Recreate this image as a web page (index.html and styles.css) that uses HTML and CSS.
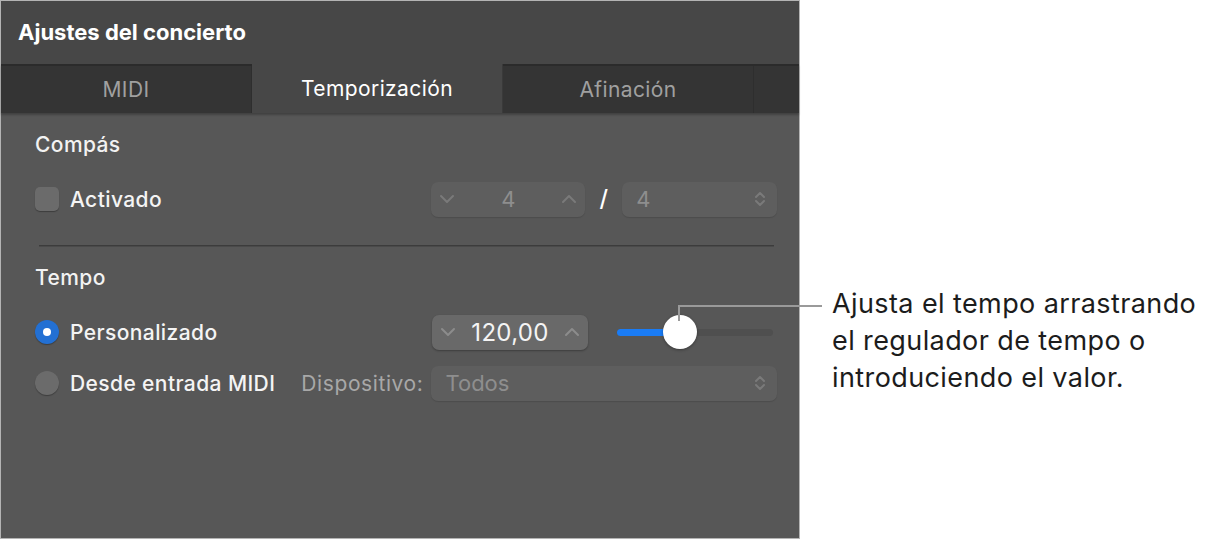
FILE: index.html
```html
<!DOCTYPE html>
<html>
<head>
    <meta charset="utf-8">
    <title>Ajustes del concierto</title>
    <link rel="stylesheet" href="styles.css">
</head>
<body>
    <div class="pagina">
        <div class="panel">
            <div class="cabecera">Ajustes del concierto</div>

            <div class="pestanas">
                <div class="pestana">MIDI</div>
                <div class="pestana activa">Temporización</div>
                <div class="pestana">Afinación</div>
                <div class="pestana resto"></div>
            </div>

            <div class="contenido">
                <h2 class="seccion">Compás</h2>

                <div class="fila">
                    <div class="etiquetas">
                        <span class="casilla"></span>
                        <span class="texto">Activado</span>
                    </div>
                    <div class="paso desactivado">
                        <svg class="flecha" width="16" height="10" viewBox="0 0 16 10"><polyline points="2,2 8,8 14,2"/></svg>
                        <span class="valor">4</span>
                        <svg class="flecha" width="16" height="10" viewBox="0 0 16 10"><polyline points="2,8 8,2 14,8"/></svg>
                    </div>
                    <span class="barra">/</span>
                    <div class="lista desactivado corta">
                        <span class="valor">4</span>
                        <svg class="flecha doble" width="12" height="18" viewBox="0 0 12 18"><polyline points="2,7 6,3 10,7"/><polyline points="2,11 6,15 10,11"/></svg>
                    </div>
                </div>

                <div class="separador"></div>

                <h2 class="seccion">Tempo</h2>

                <div class="fila">
                    <div class="etiquetas">
                        <span class="radio marcado"></span>
                        <span class="texto">Personalizado</span>
                    </div>
                    <div class="paso">
                        <svg class="flecha" width="16" height="10" viewBox="0 0 16 10"><polyline points="2,2 8,8 14,2"/></svg>
                        <span class="valor grande">120,00</span>
                        <svg class="flecha" width="16" height="10" viewBox="0 0 16 10"><polyline points="2,8 8,2 14,8"/></svg>
                    </div>
                    <div class="deslizador">
                        <div class="relleno" style="width: 64px"></div>
                        <div class="mando"></div>
                    </div>
                </div>

                <div class="fila">
                    <div class="etiquetas">
                        <span class="radio"></span>
                        <span class="texto">Desde entrada MIDI</span>
                        <span class="dispositivo">Dispositivo:</span>
                    </div>
                    <div class="lista desactivado larga">
                        <span class="valor">Todos</span>
                        <svg class="flecha doble" width="12" height="18" viewBox="0 0 12 18"><polyline points="2,7 6,3 10,7"/><polyline points="2,11 6,15 10,11"/></svg>
                    </div>
                </div>
            </div>
        </div>

        <div class="nota">
            Ajusta el tempo arrastrando<br>
            el regulador de tempo o<br>
            introduciendo el valor.
        </div>

        <div class="guia"></div>
    </div>
</body>
</html>
```

FILE: styles.css
```css
* {
    box-sizing: border-box;
}

body {
    margin: 0;
    background-color: #fff;
    font-family: Inter, Roboto, "Liberation Sans", Arial, sans-serif;
}

.pagina {
    position: relative;
    display: flex;
    width: 1205px;
    height: 540px;
}

.panel {
    width: 800px;
    height: 539px;
    flex-shrink: 0;
    background-color: #575757;
    border: 1px solid #b4b4b4;
    display: flex;
    flex-direction: column;
}

.cabecera {
    height: 63px;
    background-color: #474747;
    color: #fff;
    font-size: 22px;
    font-weight: 700;
    padding: 18px 0 0 17px;
}

.pestanas {
    display: flex;
    height: 49px;
    background-color: #343434;
    border-top: 2px solid #2b2b2b;
    box-shadow: 0 2px 2px rgba(0, 0, 0, .25);
}

.pestana {
    width: 251px;
    flex-shrink: 0;
    display: flex;
    align-items: center;
    justify-content: center;
    font-size: 21px;
    letter-spacing: .4px;
    color: #a0a0a0;
    border-right: 1px solid #2e2e2e;
}

.pestana.activa {
    background-color: #474747;
    color: #fff;
    margin-top: -2px;
    border-right: 1px solid #3a3a3a;
}

.pestana.resto {
    width: auto;
    flex: 1 1 0;
    border-right: none;
}

.contenido {
    padding: 20px 22px 0 34px;
}

.seccion {
    margin: 0;
    height: 24px;
    line-height: 24px;
    font-size: 21px;
    letter-spacing: .4px;
    font-weight: 500;
    color: #f2f2f2;
}

.fila {
    display: flex;
    align-items: center;
    height: 36px;
    margin-top: 24px;
}

.fila + .fila {
    margin-top: 15px;
}

.separador {
    height: 1px;
    margin: 28px 3px 20px 4px;
    background-color: #3c3c3c;
    box-shadow: 0 1px 0 rgba(0, 0, 0, .15);
}

.etiquetas {
    width: 397px;
    display: flex;
    align-items: center;
}

.texto {
    font-size: 21px;
    letter-spacing: .4px;
    font-weight: 500;
    color: #f4f4f4;
    margin-left: 11px;
}

.casilla {
    width: 24px;
    height: 24px;
    border-radius: 5px;
    background-color: #6b6b6b;
    box-shadow: 0 1px 1px rgba(0, 0, 0, .3);
}

.radio {
    width: 24px;
    height: 24px;
    border-radius: 50%;
    background-color: #6b6b6b;
    box-shadow: 0 1px 1px rgba(0, 0, 0, .3);
}

.radio.marcado {
    background-color: #2370d3;
    position: relative;
}

.radio.marcado::after {
    content: "";
    position: absolute;
    left: 8px;
    top: 8px;
    width: 8px;
    height: 8px;
    border-radius: 50%;
    background-color: #fff;
}

.dispositivo {
    margin-left: auto;
    margin-right: 8px;
    font-size: 21px;
    letter-spacing: .6px;
    color: #a8a8a8;
}

.paso, .lista {
    height: 35px;
    border-radius: 7px;
    background-color: #696969;
    box-shadow: 0 1px 2px rgba(0, 0, 0, .3);
    display: flex;
    align-items: center;
    font-size: 22px;
    color: #f4f4f4;
}

.valor.grande {
    font-size: 24px;
    letter-spacing: .3px;
}

.paso {
    width: 156px;
    justify-content: space-between;
    padding: 0 8px 0 8px;
}

.paso.desactivado {
    width: 154px;
}

.desactivado {
    background-color: #5e5e5e;
    box-shadow: 0 1px 1px rgba(0, 0, 0, .12);
    color: #8e8e8e;
}

.flecha polyline {
    fill: none;
    stroke: #8c8c8c;
    stroke-width: 2;
    stroke-linecap: round;
    stroke-linejoin: round;
}

.desactivado .flecha polyline {
    stroke: #7a7a7a;
}

.barra {
    width: 37px;
    text-align: center;
    font-size: 23px;
    font-weight: 500;
    color: #fff;
}

.lista {
    justify-content: space-between;
    padding: 0 11px 0 14px;
}

.lista.corta {
    width: 155px;
}

.lista.larga {
    width: 346px;
}

.deslizador {
    position: relative;
    width: 156px;
    height: 7px;
    margin-left: 29px;
    border-radius: 4px;
    background-color: #4f4f4f;
}

.relleno {
    height: 7px;
    border-radius: 4px;
    background-color: #1a7cf5;
}

.mando {
    position: absolute;
    left: 46px;
    top: -14px;
    width: 34px;
    height: 34px;
    border-radius: 50%;
    background-color: #fff;
    box-shadow: 0 1px 3px rgba(0, 0, 0, .35);
}

.nota {
    padding: 285px 0 0 32px;
    font-size: 27px;
    letter-spacing: .4px;
    line-height: 37px;
    color: #1c1c1c;
    white-space: nowrap;
}

.guia {
    position: absolute;
    left: 678px;
    top: 305px;
    width: 144px;
    height: 16px;
    border-top: 2px solid #9a9a9a;
    border-left: 2px solid #9a9a9a;
}
```
